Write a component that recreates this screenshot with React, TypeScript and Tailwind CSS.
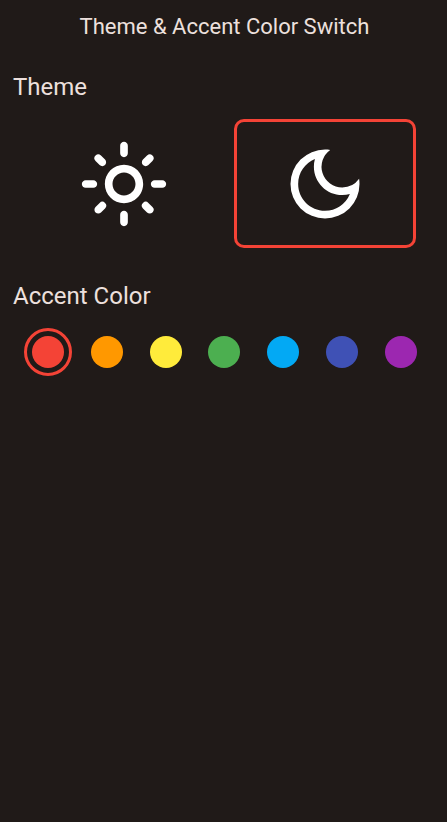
import { useState } from "react";
import { MdOutlineDarkMode, MdOutlineLightMode } from "react-icons/md";

const themes = [
  { name: "Light", Icon: MdOutlineLightMode },
  { name: "Dark", Icon: MdOutlineDarkMode },
];

const accents = [
  { name: "red", fill: "bg-[#f44336]", ring: "border-[#f44336]" },
  { name: "orange", fill: "bg-[#ff9800]", ring: "border-[#ff9800]" },
  { name: "yellow", fill: "bg-[#ffeb3b]", ring: "border-[#ffeb3b]" },
  { name: "green", fill: "bg-[#4caf50]", ring: "border-[#4caf50]" },
  { name: "light blue", fill: "bg-[#03a9f4]", ring: "border-[#03a9f4]" },
  { name: "indigo", fill: "bg-[#3f51b5]", ring: "border-[#3f51b5]" },
  { name: "purple", fill: "bg-[#9c27b0]", ring: "border-[#9c27b0]" },
];

export default function App() {
  const [theme, setTheme] = useState("Dark");
  const [accent, setAccent] = useState(0);

  return (
    <div className="min-h-screen bg-[#201a18] font-[Roboto,sans-serif] text-[#ede0dd]">
      <header className="flex h-[53px] items-center justify-center pl-[2px]">
        <h1 className="text-[22px] leading-7">Theme &amp; Accent Color Switch</h1>
      </header>
      <main className="px-[13px]">
        <h2 className="mt-[18px] text-[24px] leading-8">Theme</h2>
        <div className="mt-4 flex justify-center gap-[19px] pl-[2px]">
          {themes.map(({ name, Icon }) => (
            <button
              key={name}
              aria-label={name}
              onClick={() => setTheme(name)}
              className={`flex h-[129px] w-[182px] items-center justify-center rounded-[10px] border-[3px] text-white ${
                theme === name ? accents[accent].ring : "border-transparent"
              }`}
            >
              <Icon className="size-[92px]" />
            </button>
          ))}
        </div>
        <h2 className="mt-8 text-[24px] leading-8">Accent Color</h2>
        <div className="mt-4 grid grid-cols-7 pr-[3.6px] pl-[5.4px]">
          {accents.map(({ name, fill, ring }, i) => (
            <button
              key={name}
              aria-label={name}
              onClick={() => setAccent(i)}
              className={`flex size-12 items-center justify-center justify-self-center rounded-full border-[3px] ${
                i === accent ? ring : "border-transparent"
              }`}
            >
              <span className={`size-8 rounded-full ${fill}`} />
            </button>
          ))}
        </div>
      </main>
    </div>
  );
}
